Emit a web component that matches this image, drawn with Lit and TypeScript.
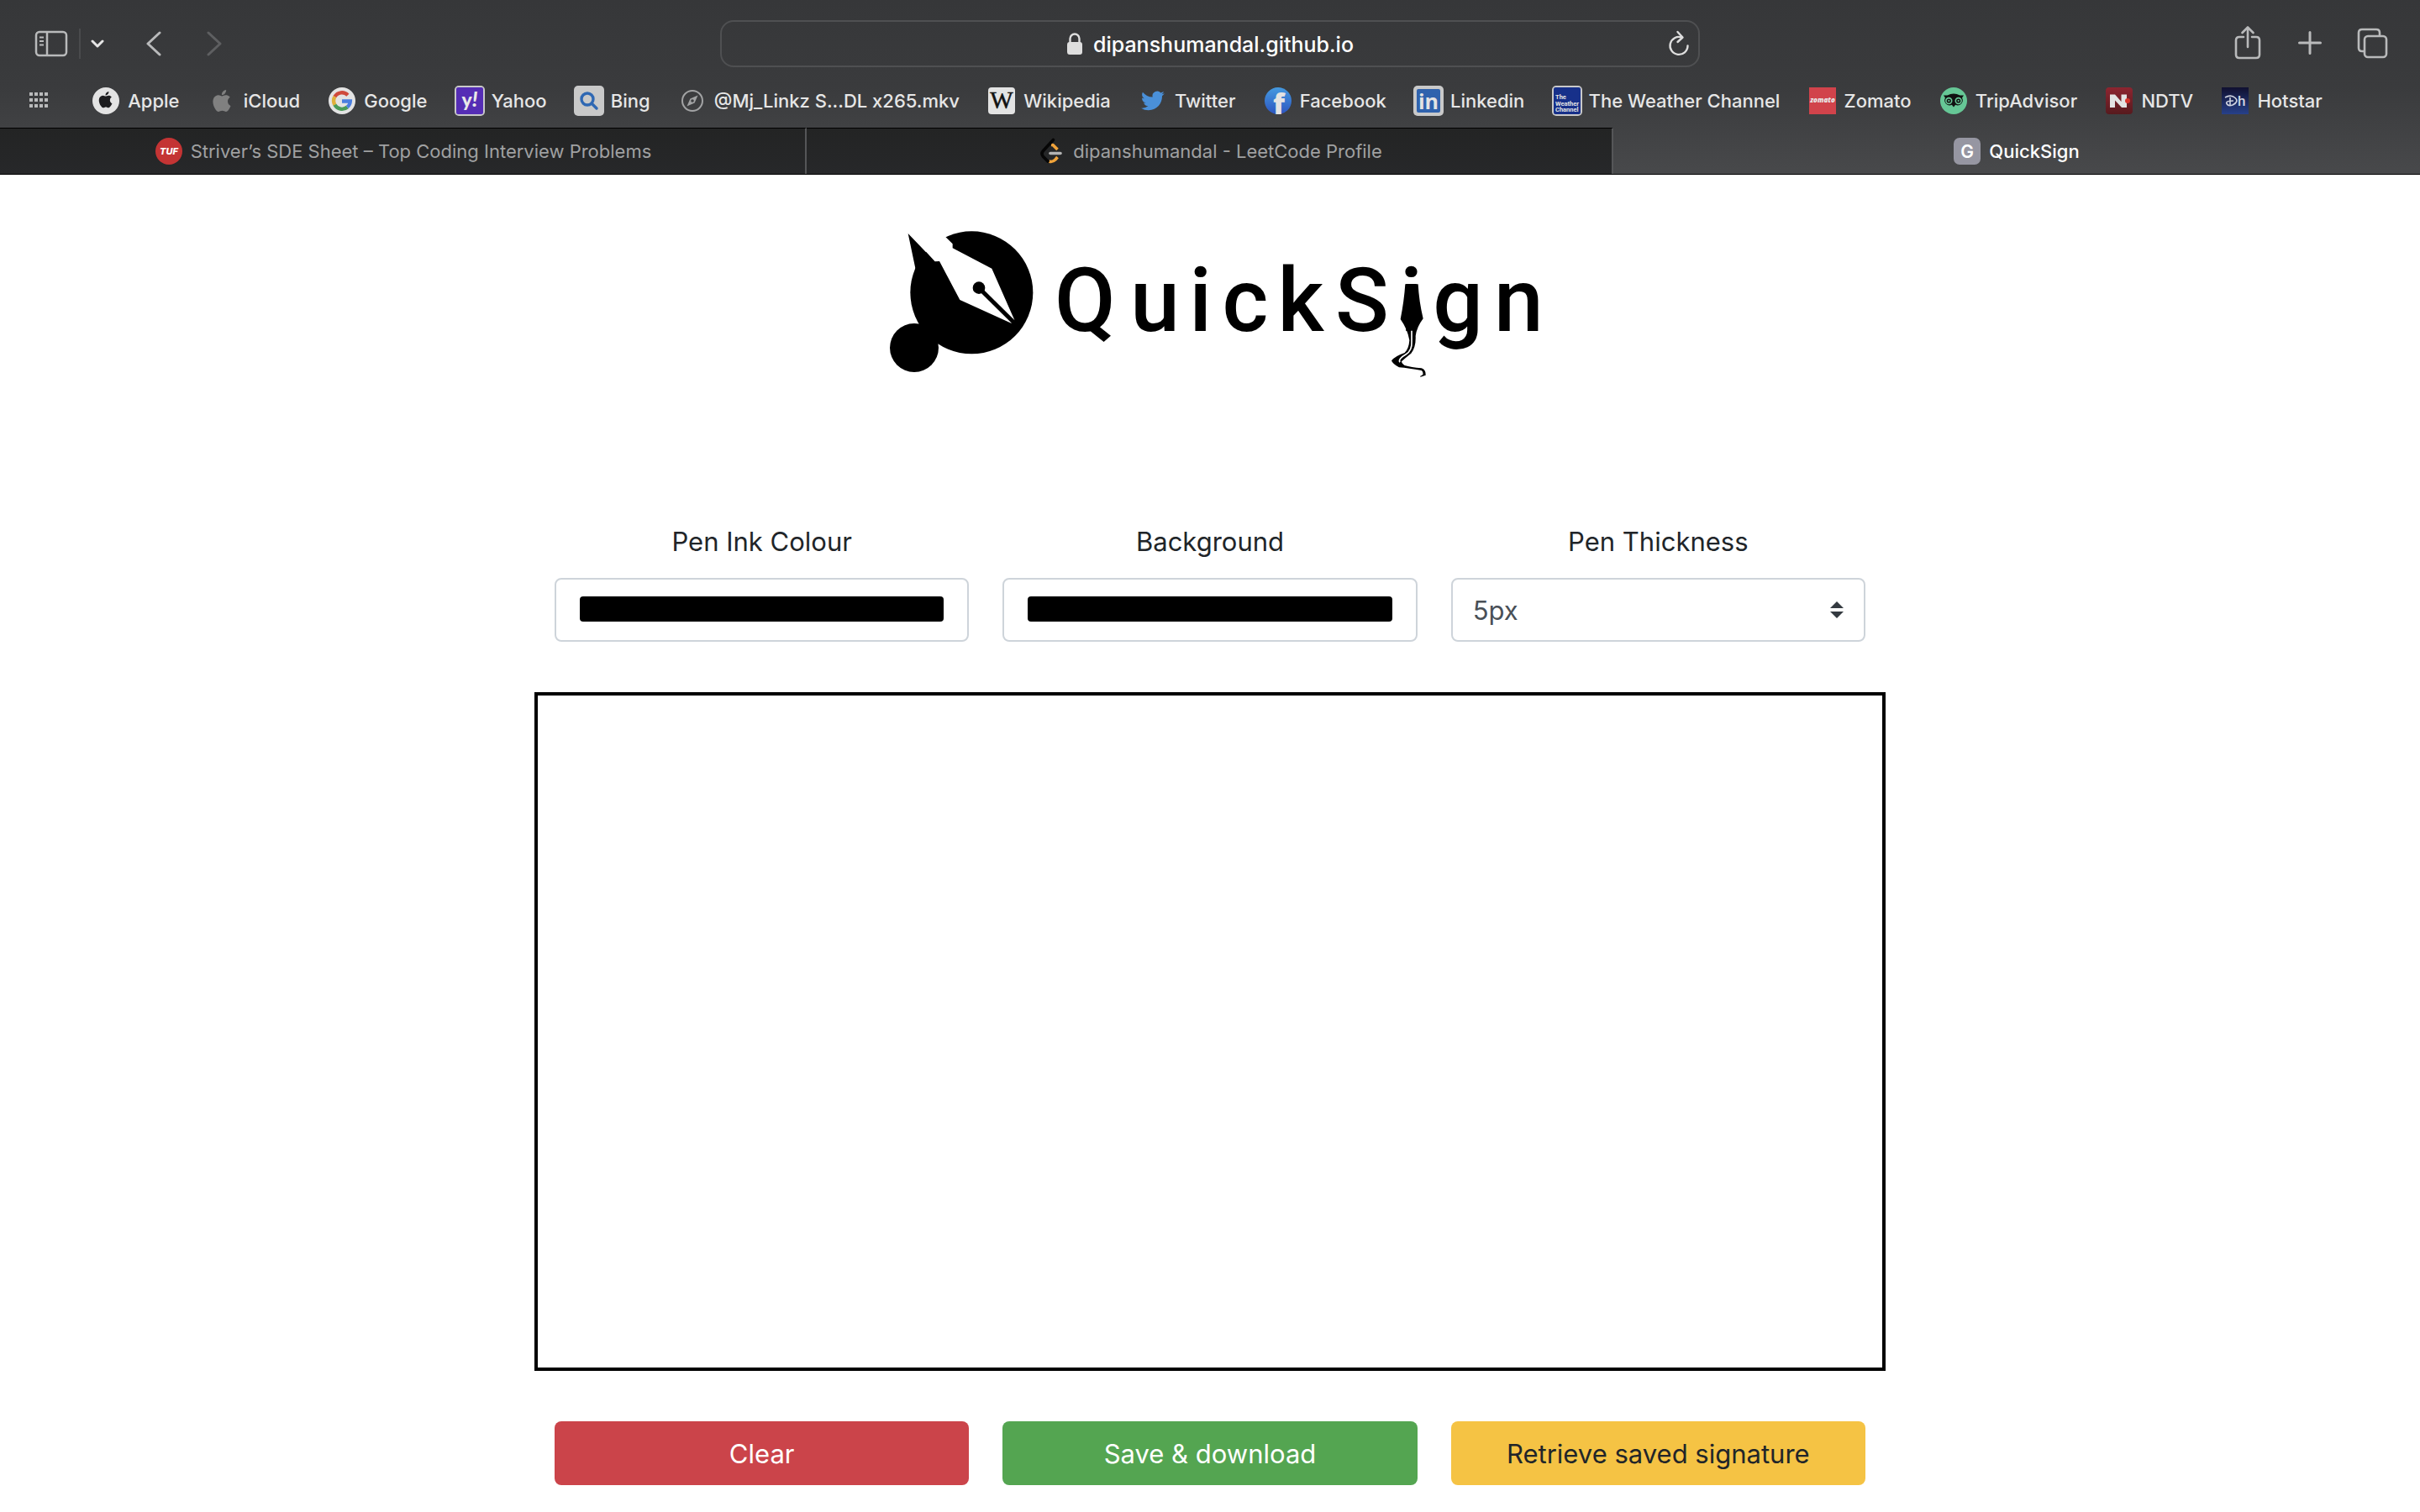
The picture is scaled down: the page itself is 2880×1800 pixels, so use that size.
import { LitElement, html, css, svg, type TemplateResult } from "lit";
import { customElement, property, state } from "lit/decorators.js";

type Glyph = TemplateResult<2>;

const APPLE =
  "M12.152 6.896c-.948 0-2.415-1.078-3.96-1.04-2.04.027-3.91 1.183-4.961 3.014-2.117 3.675-.546 9.103 1.519 12.09 1.013 1.454 2.208 3.09 3.792 3.039 1.52-.065 2.09-.987 3.935-.987 1.831 0 2.35.987 3.96.948 1.637-.026 2.676-1.48 3.676-2.948 1.156-1.688 1.636-3.325 1.662-3.415-.039-.013-3.182-1.221-3.22-4.857-.026-3.04 2.48-4.494 2.597-4.559-1.429-2.09-3.623-2.324-4.39-2.376-2-.156-3.675 1.09-4.61 1.09zM15.53 3.83c.843-1.012 1.4-2.427 1.245-3.83-1.207.052-2.662.805-3.532 1.818-.78.896-1.454 2.338-1.273 3.714 1.338.104 2.715-.688 3.559-1.701";
const BIRD =
  "M23.953 4.57a10 10 0 01-2.825.775 4.958 4.958 0 002.163-2.723c-.951.555-2.005.959-3.127 1.184a4.92 4.92 0 00-8.384 4.482C7.69 8.095 4.067 6.13 1.64 3.162a4.822 4.822 0 00-.666 2.475c0 1.71.87 3.213 2.188 4.096a4.904 4.904 0 01-2.228-.616v.06a4.923 4.923 0 003.946 4.827 4.996 4.996 0 01-2.212.085 4.936 4.936 0 004.604 3.417 9.867 9.867 0 01-6.102 2.105c-.39 0-.779-.023-1.17-.067a13.995 13.995 0 007.557 2.209c9.053 0 13.998-7.496 13.998-13.985 0-.21 0-.42-.015-.63A9.935 9.935 0 0024 4.59z";

// Every site icon is drawn on a 36 x 36 grid.
const SITE_ICONS: Record<string, Glyph> = {
  apple: svg`<circle cx="18" cy="18" r="16" fill="#e3e3e3"/><path d=${APPLE} fill="#1d1d1f" transform="translate(8 7) scale(.8)"/>`,
  icloud: svg`<path d=${APPLE} fill="#808080" transform="translate(5 5) scale(1.08)"/>`,
  google: svg`<circle cx="18" cy="18" r="16" fill="#e3e3e3"/>
    <g fill="none" stroke-width="4.4">
      <path d="M24.9 11.2A9.8 9.8 0 0 0 9.4 13.2" stroke="#cf4a3c"/>
      <path d="M9.4 13.2A9.8 9.8 0 0 0 9.4 22.8" stroke="#e0b03a"/>
      <path d="M9.4 22.8A9.8 9.8 0 0 0 24.3 25.5" stroke="#4a9a58"/>
      <path d="M18 18.500H27.8A9.8 9.8 0 0 1 24.3 25.5" stroke="#4a7fe0"/>
    </g>`,
  yahoo: svg`<rect width="36" height="36" rx="5" fill="#c9c9c9"/><rect x="2" y="2" width="32" height="32" rx="2" fill="#552db5"/>
    <text x="18" y="25" text-anchor="middle" font-family="Lato, sans-serif" font-weight="900" font-size="23" fill="#e8e8e8">y<tspan font-style="italic" font-size="25">!</tspan></text>`,
  bing: svg`<rect width="36" height="36" rx="5" fill="#c9c9c9"/><g fill="none" stroke="#2f68b3" stroke-width="3.4" stroke-linecap="round"><circle cx="16" cy="16" r="7"/><path d="M21.5 21.5L27 27"/></g>`,
  compass: svg`<g fill="none" stroke="#a2a3a4" stroke-width="2"><circle cx="18" cy="18" r="12"/></g><path d="M24.5 11.5L20.6 20.6 11.5 24.5 15.4 15.4z" fill="#a2a3a4"/><circle cx="18" cy="18" r="1.8" fill="#3c3d3f"/>`,
  wikipedia: svg`<rect x="2" y="2" width="32" height="32" rx="4" fill="#e3e3e3"/><text x="18" y="27" text-anchor="middle" font-family="Liberation Serif, serif" font-size="29" fill="#111" stroke="#111" stroke-width=".5">W</text>`,
  twitter: svg`<path d=${BIRD} fill="#4a90d9" transform="translate(4 4) scale(1.16)"/>`,
  facebook: svg`<defs><linearGradient id="fb" x1="0" y1="0" x2="0" y2="1"><stop offset="0" stop-color="#459ae0"/><stop offset="1" stop-color="#2c55c0"/></linearGradient></defs>
    <circle cx="18" cy="18" r="16" fill="url(#fb)"/><text x="19" y="34" text-anchor="middle" font-family="Open Sans, sans-serif" font-weight="800" font-size="34" fill="#e3e3e3">f</text>`,
  linkedin: svg`<rect width="36" height="36" rx="5" fill="#c9c9c9"/><rect x="4" y="4" width="28" height="28" rx="2" fill="#2f62ad"/><text x="18" y="28" text-anchor="middle" font-family="Open Sans, sans-serif" font-weight="700" font-size="25" fill="#e3e3e3">in</text>`,
  weather: svg`<rect width="36" height="36" rx="5" fill="#c9c9c9"/><rect x="2" y="2" width="32" height="32" rx="2" fill="#17308a"/>
    <g font-family="Roboto, sans-serif" font-weight="700" font-size="7.500" fill="#e3e3e3"><text x="4" y="16">The</text><text x="4" y="24">Weather</text><text x="4" y="31">Channel</text></g>`,
  zomato: svg`<rect x="2" y="2" width="32" height="32" fill="#d1434b"/><text x="18" y="20" text-anchor="middle" font-family="Open Sans, sans-serif" font-weight="800" font-style="italic" font-size="8" fill="#e8e8e8">zomato</text>`,
  tripadvisor: svg`<circle cx="18" cy="18" r="16" fill="#66c796"/>
    <path d="M6 11.500H10.500Q18 7.500 25.500 11.500H30L28 14.500A6 6 0 0 1 20.200 22.800L18 25.500 15.800 22.800A6 6 0 0 1 8 14.500z" fill="#111"/>
    <circle cx="12.300" cy="18" r="4.200" fill="#66c796"/><circle cx="23.700" cy="18" r="4.200" fill="#66c796"/><circle cx="12.300" cy="18" r="2.600" fill="#111"/><circle cx="23.700" cy="18" r="2.600" fill="#111"/><circle cx="12.300" cy="18" r="1.100" fill="#66c796"/><circle cx="23.700" cy="18" r="1.100" fill="#66c796"/>`,
  ndtv: svg`<defs><linearGradient id="nd" x1="0" y1="0" x2="0" y2="1"><stop offset="0" stop-color="#8d2530"/><stop offset="1" stop-color="#571a1e"/></linearGradient></defs>
    <rect x="2" y="2" width="32" height="32" rx="4" fill="url(#nd)"/><path d="M7 26V10.500H13L20.500 19V10.500H27V26H21L13 17.500V26z" fill="#e3e3e3"/><circle cx="28" cy="18" r="3" fill="#d8342c"/>`,
  hotstar: svg`<defs><linearGradient id="hs" x1="0" y1="0" x2="0" y2="1"><stop offset="0" stop-color="#101030"/><stop offset="1" stop-color="#27418a"/></linearGradient></defs>
    <rect x="2" y="2" width="32" height="32" fill="url(#hs)"/>
    <g fill="none" stroke="#cfd3e0" stroke-width="1.600"><path d="M6 14Q13 10 18 14.500T15 23Q10 25 8 21.500T16 18"/><path d="M12 14V24"/></g><text x="21" y="24" font-family="Roboto, sans-serif" font-size="17" fill="#cfd3e0">h</text>`,
  tuf: svg`<circle cx="18" cy="18" r="16" fill="#c43434"/><text x="18" y="22" text-anchor="middle" font-family="Inter, sans-serif" font-weight="800" font-style="italic" font-size="11" fill="#fff">TUF</text>`,
  leetcode: svg`<g fill="none" stroke-width="3.600" stroke-linecap="round" stroke-linejoin="round">
      <path d="M18 10.500L20 10.500 25.500 16M25.500 25L23 28Q19.500 31.500 15.500 30" stroke="#f0a33a" stroke-linecap="butt"/>
      <path d="M20.500 4.500L8.500 17.500Q5.500 21 8.500 24.500L14 30" stroke="#060606"/><path d="M17 20.500H29" stroke="#b3b3b3"/></g>`,
  quicksign: svg`<rect x="2" y="2" width="32" height="32" rx="7" fill="#9696a2"/><text x="18" y="26" text-anchor="middle" font-family="Inter, sans-serif" font-weight="600" font-size="21" fill="#fff">G</text>`,
};

const BOOKMARKS: [string, string][] = [
  ["apple", "Apple"],
  ["icloud", "iCloud"],
  ["google", "Google"],
  ["yahoo", "Yahoo"],
  ["bing", "Bing"],
  ["compass", "@Mj_Linkz S...DL x265.mkv"],
  ["wikipedia", "Wikipedia"],
  ["twitter", "Twitter"],
  ["facebook", "Facebook"],
  ["linkedin", "Linkedin"],
  ["weather", "The Weather Channel"],
  ["zomato", "Zomato"],
  ["tripadvisor", "TripAdvisor"],
  ["ndtv", "NDTV"],
  ["hotstar", "Hotstar"],
];

const TABS: [string, string][] = [
  ["tuf", "Striver’s SDE Sheet – Top Coding Interview Problems"],
  ["leetcode", "dipanshumandal - LeetCode Profile"],
  ["quicksign", "QuickSign"],
];

@customElement("site-icon")
class SiteIcon extends LitElement {
  @property() name = "";
  static styles = css`
    :host { display: block; flex: none; width: 36px; height: 36px; }
    svg { display: block; }
  `;
  render() {
    return html`<svg width="36" height="36" viewBox="0 0 36 36" aria-hidden="true">${SITE_ICONS[this.name]}</svg>`;
  }
}

@customElement("browser-bar")
class BrowserBar extends LitElement {
  @state() private active = 2;

  static styles = css`
    :host {
      display: block;
      background: linear-gradient(#363739, #3a3b3d 50%, #48494b);
      border-bottom: 1px solid #000;
      font-family: Inter, "Liberation Sans", sans-serif;
      color: #e6e6e6;
    }
    svg { display: block; flex: none; }
    button { display: flex; padding: 0; border: 0; background: none; font: inherit; color: inherit; }
    .toolbar {
      display: grid;
      grid-template-columns: 1fr minmax(0, 1166px) 1fr;
      align-items: center;
      padding: 24px 38px 0;
    }
    .side { display: flex; align-items: center; color: #b9babb; }
    .right { justify-content: flex-end; gap: 36px; }
    .split { width: 2px; height: 36px; margin: 0 12px; background: #4a4b4d; }
    .back { margin-left: 49px; }
    .forward { margin-left: 52px; color: #5e5f61; }
    .menu { color: #e6e6e6; }
    .address {
      display: flex;
      align-items: center;
      box-sizing: border-box;
      height: 56px;
      padding: 0 10px;
      border: 2px solid #4f5052;
      border-radius: 16px;
    }
    .address form { flex: 1; display: flex; justify-content: center; align-items: center; gap: 12px; margin-left: 26px; }
    .address input {
      field-sizing: content;
      padding: 2px 0 0;
      border: 0;
      outline: 0;
      background: none;
      color: #fff;
      font: 500 25px/32px Inter, "Liberation Sans", sans-serif;
    }
    .bookmarks { display: flex; align-items: center; justify-content: space-between; padding: 22px 116px 14px 34px; }
    .bookmarks a {
      display: flex;
      align-items: center;
      gap: 8px;
      color: inherit;
      text-decoration: none;
      font-size: 22px;
      font-weight: 500;
      line-height: 32px;
      white-space: nowrap;
    }
    .grid { margin-right: 18px; }
    .tabs { display: grid; grid-template-columns: repeat(3, 1fr); }
    .tab {
      align-items: center;
      justify-content: center;
      gap: 8px;
      box-sizing: border-box;
      height: 55px;
      min-width: 0;
      padding-bottom: 1px;
      border-top: 1px solid #000;
      border-right: 2px solid #555658;
      background: linear-gradient(#232424, #27282a);
      color: #a0a1a2;
      font-size: 22px;
      line-height: 32px;
      white-space: nowrap;
    }
    .tab.active { background: none; border-color: transparent; color: #fff; font-weight: 500; }
  `;

  render() {
    return html`
      <div class="toolbar">
        <div class="side">
          <button aria-label="Sidebar">
            <svg width="44" height="34" viewBox="0 0 44 34" fill="none" stroke="currentColor" stroke-width="2.500">
              <rect x="5" y="3" width="36" height="28" rx="4" /><path d="M18 3V31" /><path d="M9 9.500H14M9 14H14M9 18.500H14" stroke-width="2" />
            </svg>
          </button>
          <span class="split"></span>
          <button class="menu" aria-label="Tab groups">
            <svg width="16" height="16" viewBox="0 0 16 16" fill="none" stroke="currentColor" stroke-width="3" stroke-linecap="round" stroke-linejoin="round"><path d="M2 5L8 11 14 5" /></svg>
          </button>
          <button class="back" aria-label="Back">
            <svg width="20" height="30" viewBox="0 0 20 30" fill="none" stroke="currentColor" stroke-width="3" stroke-linecap="round" stroke-linejoin="round"><path d="M17 2L3 15 17 28" /></svg>
          </button>
          <button class="forward" aria-label="Forward">
            <svg width="20" height="30" viewBox="0 0 20 30" fill="none" stroke="currentColor" stroke-width="3" stroke-linecap="round" stroke-linejoin="round"><path d="M3 2L17 15 3 28" /></svg>
          </button>
        </div>
        <div class="address">
          <form>
            <svg width="20" height="28" viewBox="0 0 20 28" fill="none" stroke="#dedede">
              <path d="M4.500 14V8A5.500 5.500 0 0 1 15.500 8V14" stroke-width="2.400" /><rect x="1" y="12" width="18" height="15" rx="3" fill="#dedede" stroke="none" />
            </svg>
            <input aria-label="Address" size="24" value="dipanshumandal.github.io" />
          </form>
          <button aria-label="Reload">
            <svg width="26" height="32" viewBox="0 0 26 32" fill="none" stroke="#dedede" stroke-width="2.400" stroke-linecap="round" stroke-linejoin="round">
              <path d="M16.500 8.500A10.500 10.500 0 1 0 23.500 18.500M11.500 2L17.500 8.500 11.500 14" />
            </svg>
          </button>
        </div>
        <div class="side right">
          <button aria-label="Share">
            <svg width="38" height="42" viewBox="0 0 38 42" fill="none" stroke="currentColor" stroke-width="2.600" stroke-linecap="round" stroke-linejoin="round">
              <path d="M14 13H9Q5 13 5 17V34Q5 38 9 38H29Q33 38 33 34V17Q33 13 29 13H24M19 25V2M12.500 8L19 1.500 25.500 8" />
            </svg>
          </button>
          <button aria-label="New tab">
            <svg width="38" height="42" viewBox="0 0 38 42" fill="none" stroke="currentColor" stroke-width="3" stroke-linecap="round"><path d="M19 7.500V32.500M6.500 20H31.500" /></svg>
          </button>
          <button aria-label="Tab overview">
            <svg width="38" height="42" viewBox="0 0 38 42" fill="none" stroke="currentColor" stroke-width="2.600">
              <rect x="10" y="12" width="26" height="25" rx="4" /><path d="M10 30H7Q3 30 3 26V8Q3 4 7 4H24Q28 4 28 8V12" />
            </svg>
          </button>
        </div>
      </div>
      <nav class="bookmarks" aria-label="Favourites">
        <button class="grid" aria-label="All favourites">
          <svg width="24" height="20" viewBox="0 0 24 20" fill="#b9babb">
            ${[0, 1, 2, 3].map((c) => [0, 1, 2].map((r) => svg`<rect x=${c * 6 + 1} y=${r * 7} width="4" height="4"/>`))}
          </svg>
        </button>
        ${BOOKMARKS.map(([icon, name]) => html`<a href="#"><site-icon name=${icon}></site-icon>${name}</a>`)}
      </nav>
      <div class="tabs" role="tablist">
        ${TABS.map(
          ([icon, name], i) => html`<button role="tab" class="tab ${i === this.active ? "active" : ""}" aria-selected=${i === this.active} @click=${() => (this.active = i)}>
            <site-icon name=${icon}></site-icon>${name}
          </button>`
        )}
      </div>
    `;
  }
}

@customElement("app-root")
class AppRoot extends LitElement {
  static styles = css`
    :host {
      display: block;
      min-height: 100vh;
      background: #fff;
      color: #212529;
      font-family: Inter, "Liberation Sans", sans-serif;
      font-size: 31px;
      line-height: 48px;
    }
    main { max-width: 1608px; margin: 0 auto; padding: 42px 24px 32px; }
    h1 { display: flex; justify-content: center; margin: 0 0 171px; }
    .row { display: grid; grid-template-columns: repeat(3, 1fr); gap: 40px; margin: 0 24px; }
    .field { display: flex; flex-direction: column; gap: 19px; text-align: center; }
    .control {
      box-sizing: border-box;
      width: 100%;
      height: 76px;
      border: 2px solid #ced4da;
      border-radius: 8px;
      background: #fff;
      font: inherit;
      color: #495057;
    }
    .color { appearance: none; padding: 20px 28px 22px; }
    .color::-webkit-color-swatch-wrapper { padding: 0; }
    .color::-webkit-color-swatch { border: 0; border-radius: 4px; }
    .picker { display: grid; align-items: center; }
    .picker > * { grid-area: 1 / 1; }
    .picker svg { justify-self: end; margin-right: 26px; pointer-events: none; }
    select.control { appearance: none; padding: 2px 24px 0; }
    canvas { display: block; box-sizing: border-box; width: 100%; height: auto; margin: 60px 0; border: 4px solid #000; }
    .action {
      height: 76px;
      padding: 2px 24px 0;
      border: 0;
      border-radius: 8px;
      font: inherit;
      color: #fff;
      white-space: nowrap;
    }
    .danger { background: #cb444a; }
    .success { background: #54a551; }
    .warning { background: #f5c344; color: #212529; }
  `;

  render() {
    return html`
      <browser-bar></browser-bar>
      <main>
        <h1>
          <svg width="820" height="200" viewBox="0 0 2460 600" role="img" aria-label="QuickSign">
            <circle cx="379" cy="295" r="219" />
            <circle cx="174" cy="492" r="87" />
            <path d="M152 84L248 184 260 260H170L178 208z" />
            <path d="M154 82L248 184 264 183 337 321 520 404 532 393 451 209 311 136V121L288 98 240 50z" fill="#fff" />
            <circle cx="405" cy="278" r="22" />
            <path d="M405 278L528 400" stroke="#000" stroke-width="15" />
            <text y="431" x="784 1034 1196 1356 1554 1773 1948 2115 2332" text-anchor="middle" font-family="Roboto, sans-serif" font-weight="500" font-size="316">QuickSign</text>
            <path d="M1927 265H1973Q1976 325 1991 388 1968 418 1964 450 1966 490 1948 512 1925 530 1914 541 1914 547 1925 555 1948 562 1985 565 2001 570 2000 590 1965 602 1990 588 1992 577 1985 573 1940 565 1905 562 1882 550 1878 538 1890 522 1925 510 1940 495 1942 465 1935 425 1910 390 1923 325 1927 265z" />
            <path d="M1950 431V470Q1952 502 1930 515 1900 532 1908 544" fill="none" stroke="#fff" stroke-width="5" />
          </svg>
        </h1>
        <div class="row">
          <div class="field"><label for="ink">Pen Ink Colour</label><input id="ink" class="control color" type="color" value="#000000" /></div>
          <div class="field"><label for="paper">Background</label><input id="paper" class="control color" type="color" value="#000000" /></div>
          <div class="field">
            <label for="thickness">Pen Thickness</label>
            <div class="picker">
              <select id="thickness" class="control"><option>5px</option></select>
              <svg width="16" height="20" viewBox="0 0 16 20" fill="#343a40"><path d="M0 8L8 0 16 8zM0 12H16L8 20z" /></svg>
            </div>
          </div>
        </div>
        <canvas width="1600" height="800"></canvas>
        <div class="row">
          <button class="action danger">Clear</button>
          <button class="action success">Save &amp; download</button>
          <button class="action warning">Retrieve saved signature</button>
        </div>
      </main>
    `;
  }
}
